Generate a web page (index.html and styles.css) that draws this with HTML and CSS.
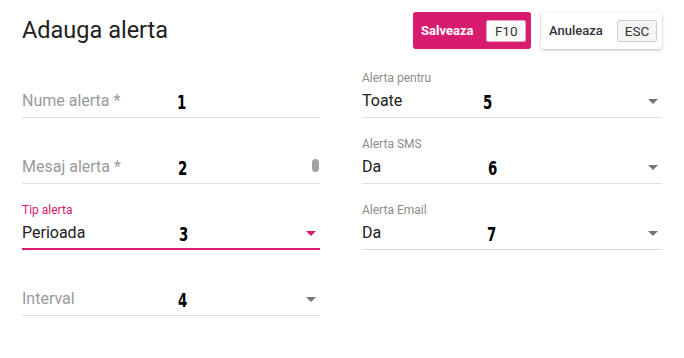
FILE: index.html
```html
<!DOCTYPE html>
<html lang="ro">
<head>
<meta charset="utf-8">
<title>Adauga alerta</title>
<link rel="stylesheet" href="styles.css">
</head>
<body>
<div class="page">
  <header class="header">
    <h1 class="title">Adauga alerta</h1>
    <div class="actions">
      <button class="btn btn-primary"><span class="btn-label">Salveaza</span><span class="key">F10</span></button>
      <button class="btn btn-secondary"><span class="btn-label">Anuleaza</span><span class="key">ESC</span></button>
    </div>
  </header>
  <div class="form">
    <div class="col">
      <div class="field">
        <div class="label"></div>
        <div class="value placeholder">Nume alerta *<span class="mark m1">1</span></div>
      </div>
      <div class="field">
        <div class="label"></div>
        <div class="value placeholder">Mesaj alerta *<span class="mark m2">2</span><span class="thumb"></span></div>
      </div>
      <div class="field focused">
        <div class="label">Tip alerta</div>
        <div class="value">Perioada<span class="mark m3">3</span><span class="arrow"></span></div>
      </div>
      <div class="field">
        <div class="label"></div>
        <div class="value placeholder">Interval<span class="mark m4">4</span><span class="arrow"></span></div>
      </div>
    </div>
    <div class="col">
      <div class="field">
        <div class="label">Alerta pentru</div>
        <div class="value">Toate<span class="mark m5">5</span><span class="arrow"></span></div>
      </div>
      <div class="field">
        <div class="label">Alerta SMS</div>
        <div class="value">Da<span class="mark m6">6</span><span class="arrow"></span></div>
      </div>
      <div class="field">
        <div class="label">Alerta Email</div>
        <div class="value">Da<span class="mark m7">7</span><span class="arrow"></span></div>
      </div>
    </div>
  </div>
</div>
</body>
</html>
```

FILE: styles.css
```css
html, body {
  margin: 0;
  padding: 0;
  background: #ffffff;
}
body {
  font-family: Roboto, "Liberation Sans", Arial, sans-serif;
  color: #212121;
}
.page {
  padding: 0 22px;
  width: 640px;
}
.header {
  display: flex;
  justify-content: space-between;
  align-items: flex-start;
  height: 71px;
}
.title {
  margin: 0;
  padding-top: 16px;
  font-size: 23.5px;
  font-weight: 400;
  line-height: 28px;
  color: #212121;
}
.actions {
  display: flex;
  gap: 10px;
  padding-top: 12px;
}
.btn {
  display: flex;
  align-items: center;
  height: 37px;
  padding: 0 5px 0 8px;
  border: none;
  border-radius: 3px;
  font-family: Roboto, "Liberation Sans", Arial, sans-serif;
  cursor: pointer;
}
.btn-label {
  font-size: 13px;
  margin-right: 13px;
}
.btn-primary {
  background: #d81b6f;
  color: #ffffff;
  width: 118px;
}
.btn-primary .btn-label {
  font-weight: 700;
}
.btn-secondary {
  background: #ffffff;
  color: #333333;
  width: 121px;
  box-shadow: 0 1px 3px rgba(0,0,0,0.28);
}
.btn-secondary .btn-label {
  font-weight: 500;
}
.key {
  display: inline-flex;
  align-items: center;
  justify-content: center;
  width: 40px;
  height: 22px;
  box-sizing: border-box;
  background: #f5f5f5;
  border: 1px solid #cfcfcf;
  border-radius: 2px;
  font-size: 13.5px;
  color: #333333;
  margin-left: auto;
}
.btn-primary .key {
  background: #fafafa;
  border-color: #e8a3c2;
}
.form {
  display: grid;
  grid-template-columns: 298px 300px;
  column-gap: 42px;
}
.col {
  display: flex;
  flex-direction: column;
  gap: 19px;
}
.field {
  display: flex;
  flex-direction: column;
  border-bottom: 1px solid #dedede;
  padding-bottom: 4px;
}
.label {
  height: 14px;
  line-height: 14px;
  font-size: 12px;
  color: #8c8c8c;
  margin-bottom: 4px;
}
.value {
  position: relative;
  height: 24px;
  line-height: 24px;
  font-size: 16px;
  color: #212121;
}
.placeholder {
  color: #9a9a9a;
}
.focused {
  border-bottom: 2px solid #d81b6f;
  padding-bottom: 3px;
}
.focused .label {
  color: #d81b6f;
}
.arrow {
  position: absolute;
  right: 4px;
  top: 10px;
  width: 0;
  height: 0;
  border-left: 5px solid transparent;
  border-right: 5px solid transparent;
  border-top: 5px solid #767676;
}
.focused .arrow {
  border-top-color: #d81b6f;
}
.thumb {
  position: absolute;
  right: 1px;
  top: 4px;
  width: 7px;
  height: 13px;
  border-radius: 3.5px;
  background: #a3a3a3;
}
.mark {
  position: absolute;
  top: 1px;
  font-family: "DejaVu Sans Condensed", "DejaVu Sans", sans-serif;
  font-weight: 700;
  font-size: 19px;
  line-height: 24px;
  color: #000000;
  transform: scaleX(0.78);
  transform-origin: left center;
}
.m1 { left: 155px; }
.m2 { left: 156px; }
.m3 { left: 157px; }
.m4 { left: 156px; }
.m5 { left: 121px; }
.m6 { left: 126px; }
.m7 { left: 125px; }
```
